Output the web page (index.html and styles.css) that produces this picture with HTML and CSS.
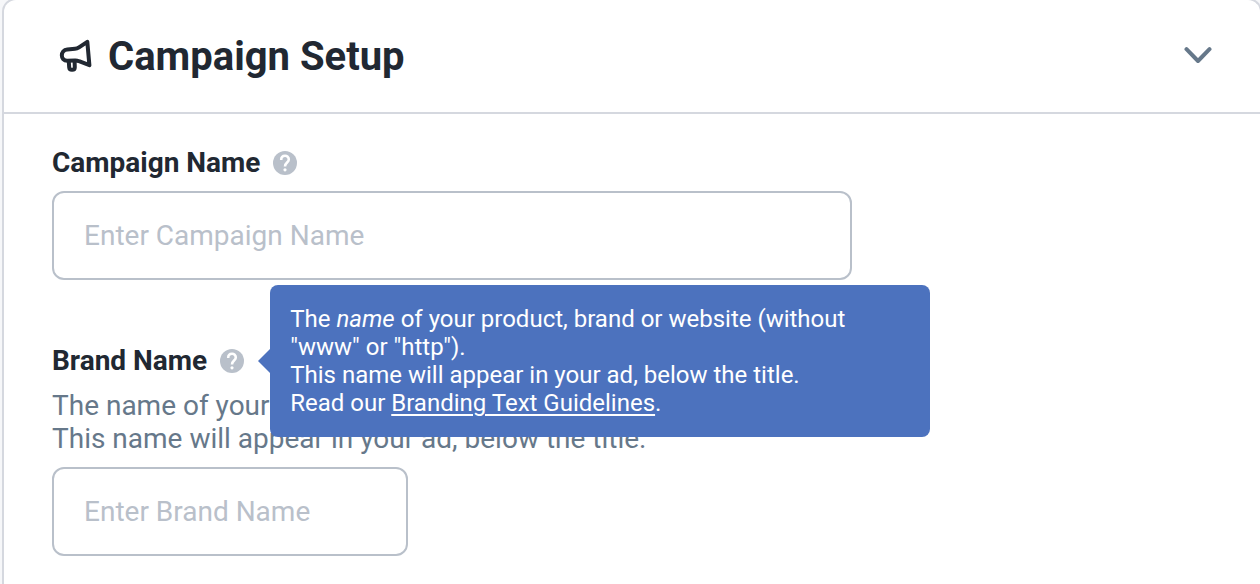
FILE: index.html
```html
<!DOCTYPE html>
<html lang="en">
<head>
    <meta charset="UTF-8">
    <meta name="viewport" content="width=device-width, initial-scale=1.0">
    <title>Campaign Setup</title>
    <link rel="stylesheet" href="styles.css">
</head>
<body>
    <section class="panel">
        <header class="panel-header">
            <svg class="panel-icon" viewBox="0 0 36 36" aria-hidden="true">
                <path d="M29.3 2.8 L21 8.4 Q19 9.7 17 9.8 L9.3 10.4 C2 11 2 21.8 9.3 21.8 L17 21.4 Q19 21.3 21 22.2 L31.4 26.2 Z"/>
                <path d="M10.8 22.6 L11.2 28.4 C11.5 31.8 16.8 31.6 16.8 28.2 L16.6 22.4"/>
            </svg>
            <h1>Campaign Setup</h1>
            <button class="panel-toggle" type="button" aria-label="Collapse section">
                <svg viewBox="0 0 28 18"><path d="M2.5 2.2 L14 14 L25.5 2.2"/></svg>
            </button>
        </header>
        <form class="panel-body">
            <div class="field">
                <div class="field-label">
                    <label for="campaign-name">Campaign Name</label>
                    <span class="help">
                        <button class="help-button" type="button" aria-label="About campaign name">
                            <svg viewBox="0 0 24 24"><circle cx="12" cy="12" r="12"/><path d="M8.2 8.9 C8.2 3.4 15.9 3.6 15.8 8.5 C15.7 11.5 12 11.5 12 15.4"/><circle class="dot" cx="12" cy="18.8" r="1.6"/></svg>
                        </button>
                    </span>
                </div>
                <input class="field-input wide" id="campaign-name" type="text" placeholder="Enter Campaign Name">
            </div>
            <div class="field">
                <div class="field-label">
                    <label for="brand-name">Brand Name</label>
                    <span class="help">
                        <button class="help-button" type="button" aria-label="About brand name" aria-describedby="brand-tooltip">
                            <svg viewBox="0 0 24 24"><circle cx="12" cy="12" r="12"/><path d="M8.2 8.9 C8.2 3.4 15.9 3.6 15.8 8.5 C15.7 11.5 12 11.5 12 15.4"/><circle class="dot" cx="12" cy="18.8" r="1.6"/></svg>
                        </button>
                        <span class="tooltip" id="brand-tooltip" role="tooltip">
                            The <em>name</em> of your product, brand or website (without "www" or "http").<br>
                            This name will appear in your ad, below the title.<br>
                            Read our <a href="#guidelines">Branding Text Guidelines</a>.
                        </span>
                    </span>
                </div>
                <p class="field-text">The name of your product, brand or website.<br>This name will appear in your ad, below the title.</p>
                <input class="field-input" id="brand-name" type="text" placeholder="Enter Brand Name">
            </div>
        </form>
    </section>
</body>
</html>
```
FILE: styles.css
```css
* { margin: 0; padding: 0; box-sizing: border-box; font-family: Roboto, Arial, sans-serif; }
body { background-color: #f6f7f9; color: #212832; min-height: 100vh; display: flex; overflow-x: hidden; }
button { background: none; border: none; cursor: pointer; }
svg { display: block; fill: none; stroke-linecap: round; stroke-linejoin: round; }

.panel { flex: 1; margin: -2px -2px 0 2px; background-color: #ffffff; border: 2px solid #d5d8df; border-bottom: none; border-radius: 14px 14px 0 0; }
.panel-header { display: flex; align-items: center; padding: 32px 48px 30px 54px; border-bottom: 2px solid #d5d8df; }
.panel-icon { width: 36px; height: 36px; margin-right: 14px; stroke: #212832; stroke-width: 4; }
.panel-header h1 { flex: 1; font-size: 40px; line-height: 50px; font-weight: 700; }
.panel-toggle svg { width: 28px; height: 18px; margin-bottom: 2px; stroke: #66788a; stroke-width: 4; }
.panel-body { padding: 32px 48px 28px; }

.field { margin-bottom: 64px; }
.field:last-child { margin-bottom: 0; }
.field-label { display: flex; align-items: center; gap: 13px; margin-bottom: 11px; font-size: 28px; line-height: 34px; font-weight: 700; }
.field-text { margin-bottom: 12px; color: #66788a; font-size: 28px; line-height: 33px; }
.field-input { display: block; width: 356px; max-width: 100%; height: 89px; padding: 0 30px; border: 2px solid #b9c0ca; border-radius: 12px; background-color: #ffffff; color: #212832; font-size: 28px; }
.field-input.wide { width: 800px; }
.field-input::placeholder { color: #b9c0ca; opacity: 1; }

.help { position: relative; }
.help-button { display: block; }
.help-button svg { width: 24px; height: 24px; }
.help-button circle { fill: #b9c0ca; }
.help-button path { stroke: #ffffff; stroke-width: 2.6; stroke-linecap: butt; }
.help-button .dot { fill: #ffffff; }

.tooltip { position: absolute; left: 50px; top: 50%; transform: translateY(-50%); width: 660px; padding: 20px; border-radius: 8px; background-color: #4c72be; color: #ffffff; font-size: 24px; line-height: 28px; font-weight: 400; z-index: 10; }
.tooltip::before { content: ""; position: absolute; right: 100%; top: 50%; margin-top: -12px; border: 12px solid transparent; border-left: none; border-right-color: #4c72be; }
.tooltip a { color: #ffffff; text-underline-offset: 3px; text-decoration-thickness: 2px; }
```
